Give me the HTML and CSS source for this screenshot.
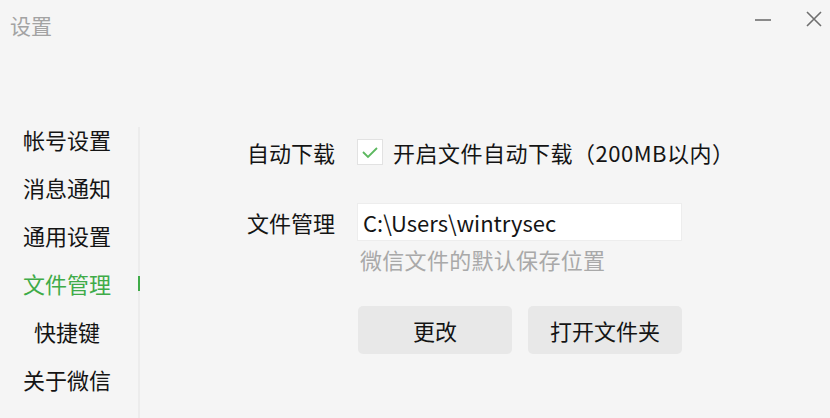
FILE: index.html
```html
<!DOCTYPE html>
<html lang="zh-CN">
<head>
<meta charset="utf-8">
<title>设置</title>
<link rel="stylesheet" href="styles.css">
</head>
<body>
<div class="window">
  <div class="titlebar">
    <div class="title">设置</div>
    <div class="controls">
      <svg class="ctl min" width="18" height="18" viewBox="0 0 18 18"><line x1="1" y1="10" x2="17" y2="10" stroke="#6f6f6f" stroke-width="1.6"/></svg>
      <svg class="ctl close" width="18" height="18" viewBox="0 0 18 18"><path d="M2 2 L16 16 M16 2 L2 16" stroke="#6f6f6f" stroke-width="1.6" fill="none"/></svg>
    </div>
  </div>
  <div class="main">
    <nav class="sidebar">
      <div class="nav-item">帐号设置</div>
      <div class="nav-item">消息通知</div>
      <div class="nav-item">通用设置</div>
      <div class="nav-item active">文件管理</div>
      <div class="nav-item">快捷键</div>
      <div class="nav-item">关于微信</div>
    </nav>
    <section class="content">
      <div class="row row-download">
        <div class="label">自动下载</div>
        <div class="field">
          <span class="checkbox">
            <svg width="18" height="14" viewBox="0 0 18 14"><path d="M2 7 L7 12 L16 3" stroke="#5cb85f" stroke-width="1.8" fill="none"/></svg>
          </span>
          <span class="check-text">开启文件自动下载（200MB以内）</span>
        </div>
      </div>
      <div class="row row-path">
        <div class="label">文件管理</div>
        <div class="field">
          <div class="path-input">C:\Users\wintrysec</div>
        </div>
      </div>
      <div class="hint">微信文件的默认保存位置</div>
      <div class="buttons">
        <button class="btn">更改</button>
        <button class="btn">打开文件夹</button>
      </div>
    </section>
  </div>
</div>
</body>
</html>
```

FILE: styles.css
```css
* { box-sizing: border-box; }
html, body {
  margin: 0;
  padding: 0;
  background: #f5f5f5;
  font-family: "Noto Sans CJK SC", "Noto Sans", sans-serif;
  color: #141414;
}
.window {
  width: 830px;
  height: 418px;
  overflow: hidden;
}
.titlebar {
  height: 115px;
  display: flex;
  justify-content: space-between;
  align-items: flex-start;
}
.title {
  margin: 11px 0 0 10px;
  font-size: 21px;
  line-height: 28px;
  color: #a3a3a3;
}
.controls {
  display: flex;
  gap: 33px;
  margin: 10px 7px 0 0;
}
.main {
  display: flex;
}
.sidebar {
  width: 140px;
  height: 303px;
  position: relative;
}
.sidebar::before {
  content: "";
  position: absolute;
  right: 0;
  top: 12px;
  bottom: 0;
  width: 2px;
  background: #ececec;
}
.nav-item {
  height: 48px;
  line-height: 48px;
  font-size: 22px;
  text-align: center;
  padding-right: 6px;
  position: relative;
}
.nav-item.active {
  color: #3fab48;
}
.nav-item.active::after {
  content: "";
  position: absolute;
  right: 0;
  top: 17px;
  width: 2px;
  height: 15px;
  background: #3fab48;
}
.content {
  padding-left: 107px;
  padding-top: 18px;
  display: flex;
  flex-direction: column;
}
.row {
  display: flex;
  align-items: center;
  height: 38px;
}
.label {
  width: 110px;
  font-size: 22px;
  line-height: 38px;
}
.field {
  display: flex;
  align-items: center;
}
.checkbox {
  width: 26px;
  height: 26px;
  border: 1px solid #e2e2e2;
  background: #fff;
  display: flex;
  align-items: center;
  justify-content: center;
  margin-right: 10px;
}
.check-text {
  font-size: 22px;
  line-height: 38px;
  letter-spacing: 0.5px;
}
.row-path {
  margin-top: 32px;
}
.path-input {
  width: 325px;
  height: 38px;
  background: #fff;
  border: 1px solid #ededed;
  font-size: 22px;
  line-height: 36px;
  padding-left: 5px;
}
.hint {
  margin-top: 5px;
  margin-left: 113px;
  font-size: 22px;
  line-height: 26px;
  letter-spacing: 0.3px;
  color: #a9a9a9;
}
.buttons {
  display: flex;
  gap: 16px;
  margin-top: 34px;
  margin-left: 111px;
}
.btn {
  width: 154px;
  height: 48px;
  border: none;
  border-radius: 5px;
  background: #e8e8e8;
  font-family: "Noto Sans CJK SC", sans-serif;
  font-size: 22px;
  color: #141414;
  padding: 0;
}
```
